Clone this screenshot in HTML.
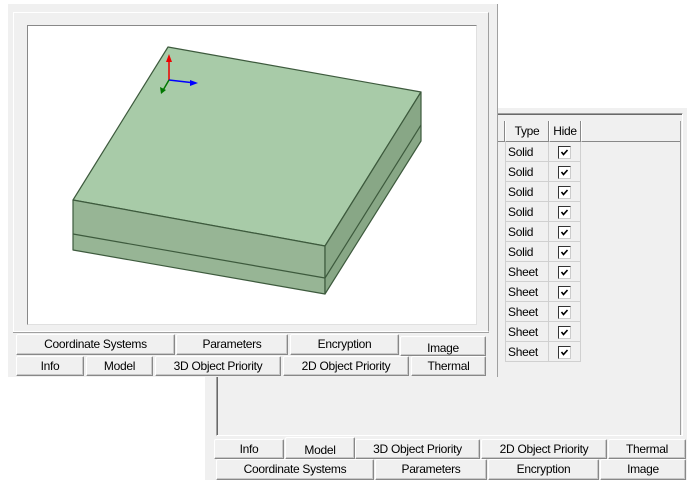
<!DOCTYPE html>
<html><head><style>
body{margin:0;width:687px;height:480px;background:#fff;position:relative;overflow:hidden;font-family:"Liberation Sans",Arial,sans-serif;font-size:12px;}
.a{position:absolute;box-sizing:border-box;}
.tab{position:absolute;box-sizing:border-box;background:#f0f0f0;border-top:1px solid #fff;border-left:1px solid #fff;border-right:1px solid #888;border-bottom:1px solid #888;border-radius:2px 2px 0 0;text-align:center;color:#000;line-height:19px;font-size:12px;letter-spacing:-0.3px;box-shadow:inset -1px -1px 0 #c8c8c8;}
.row{position:absolute;left:505px;width:76px;height:20px;}
.cell{position:absolute;top:0;height:20px;box-sizing:border-box;border-right:1px solid #d0d0d0;border-bottom:1px solid #d0d0d0;line-height:20px;letter-spacing:-0.3px;}
.cb{position:absolute;left:9px;top:4px;width:13px;height:13px;box-sizing:border-box;background:#fff;border:1px solid #333;border-right-color:#ccc;border-bottom-color:#ccc;}
</style></head><body>
<div class="a" style="left:205px;top:108px;width:482px;height:372px;background:#f0f0f0;"></div>
<div class="a" style="left:216px;top:113px;width:467px;height:323px;border:1px solid #a0a0a0;border-right-color:#fff;border-bottom-color:#fff;box-shadow:inset 1px 1px 0 #696969;"></div>
<div class="a" style="left:497px;top:121px;width:8px;height:21px;border-right:1px solid #888;border-bottom:1px solid #888;"></div>
<div class="a" style="left:505px;top:121px;width:44px;height:21px;border-left:1px solid #fff;border-right:1px solid #888;border-bottom:1px solid #888;text-align:center;line-height:21px;letter-spacing:-0.3px;">Type</div>
<div class="a" style="left:549px;top:121px;width:32px;height:21px;border-left:1px solid #fff;border-right:1px solid #888;border-bottom:1px solid #888;text-align:center;line-height:21px;letter-spacing:-0.3px;">Hide</div>
<div class="a" style="left:581px;top:121px;width:100px;height:21px;border-left:1px solid #fff;border-right:1px solid #888;border-bottom:1px solid #888;"></div>
<div class="a" style="left:680px;top:121px;width:2px;height:314px;border-left:1px solid #a0a0a0;"></div>

<div id="rows"></div>

<div class="tab" style="left:214px;top:439px;width:70px;height:20px;">Info</div>
<div class="tab" style="left:355px;top:439px;width:125px;height:20px;">3D Object Priority</div>
<div class="tab" style="left:481px;top:439px;width:126px;height:20px;">2D Object Priority</div>
<div class="tab" style="left:608px;top:439px;width:78px;height:20px;">Thermal</div>
<div class="tab" style="left:285px;top:437px;width:70px;height:22px;line-height:25px;">Model</div>
<div class="tab" style="left:216px;top:459px;width:158px;height:21px;">Coordinate Systems</div>
<div class="tab" style="left:375px;top:459px;width:112px;height:21px;">Parameters</div>
<div class="tab" style="left:488px;top:459px;width:111px;height:21px;">Encryption</div>
<div class="tab" style="left:600px;top:459px;width:86px;height:21px;">Image</div>

<div class="a" style="left:8px;top:4px;width:490px;height:373px;background:#f0f0f0;border-right:1px solid #a0a0a0;"></div>
<div class="a" style="left:13px;top:12px;width:476px;height:320px;border:1px solid #fff;border-right:1px solid #a0a0a0;"></div>
<div class="a" style="left:27px;top:25px;width:450px;height:300px;background:#fff;border:1px solid #888;border-right-color:#e0e0e0;border-bottom-color:#e0e0e0;"></div>
<svg class="a" style="left:0;top:0" width="687" height="480">
<g stroke="#3d5a3d" stroke-width="1.2" stroke-linejoin="round">
<polygon points="168,47 421,92 325,246 73,200" fill="#a8cba8"/>
<polygon points="73,200 325,246 325,294 73,250" fill="#97b595"/>
<polygon points="325,246 421,92 421,141 325,294" fill="#88a786"/>
<line x1="73" y1="234" x2="325" y2="278"/>
<line x1="325" y1="278" x2="421" y2="125"/>
</g>
<line x1="169" y1="80" x2="169" y2="58" stroke="#e00" stroke-width="1.5"/>
<polygon points="169,54 166,62 172,62" fill="#e00"/>
<line x1="169" y1="80" x2="195" y2="83" stroke="#00f" stroke-width="1.5"/>
<polygon points="198,83 190,80 190,86" fill="#00f"/>
<line x1="169" y1="80" x2="162" y2="92" stroke="#070" stroke-width="1.5"/>
<polygon points="161,94 160,87 166,90" fill="#070"/>
</svg>
<div class="a" style="left:13px;top:332px;width:476px;height:1px;background:#a0a0a0;"></div>
<div class="tab" style="left:16px;top:334px;width:159px;height:21px;">Coordinate Systems</div>
<div class="tab" style="left:176px;top:334px;width:112px;height:21px;">Parameters</div>
<div class="tab" style="left:290px;top:334px;width:109px;height:21px;">Encryption</div>
<div class="tab" style="left:400px;top:336px;width:86px;height:20px;line-height:23px;">Image</div>
<div class="tab" style="left:16px;top:356px;width:68px;height:20px;">Info</div>
<div class="tab" style="left:86px;top:356px;width:67px;height:20px;">Model</div>
<div class="tab" style="left:155px;top:356px;width:126px;height:20px;">3D Object Priority</div>
<div class="tab" style="left:283px;top:356px;width:126px;height:20px;">2D Object Priority</div>
<div class="tab" style="left:411px;top:356px;width:75px;height:20px;">Thermal</div>

<script>
var t=["Solid","Solid","Solid","Solid","Solid","Solid","Sheet","Sheet","Sheet","Sheet","Sheet"],h="";
for(var i=0;i<t.length;i++){h+='<div class="row" style="top:'+(142+i*20)+'px"><div class="cell" style="left:0;width:44px;padding-left:2px;border-left:1px solid #d0d0d0;">'+t[i]+'</div><div class="cell" style="left:44px;width:32px;"><div class="cb"><svg width="11" height="11" style="position:absolute;left:0;top:0"><path d="M2.5 5 L4.5 7.5 L8.5 3" stroke="#000" stroke-width="1.6" fill="none"/></svg></div></div></div>';}
document.getElementById("rows").innerHTML=h;
</script>
</body></html>
